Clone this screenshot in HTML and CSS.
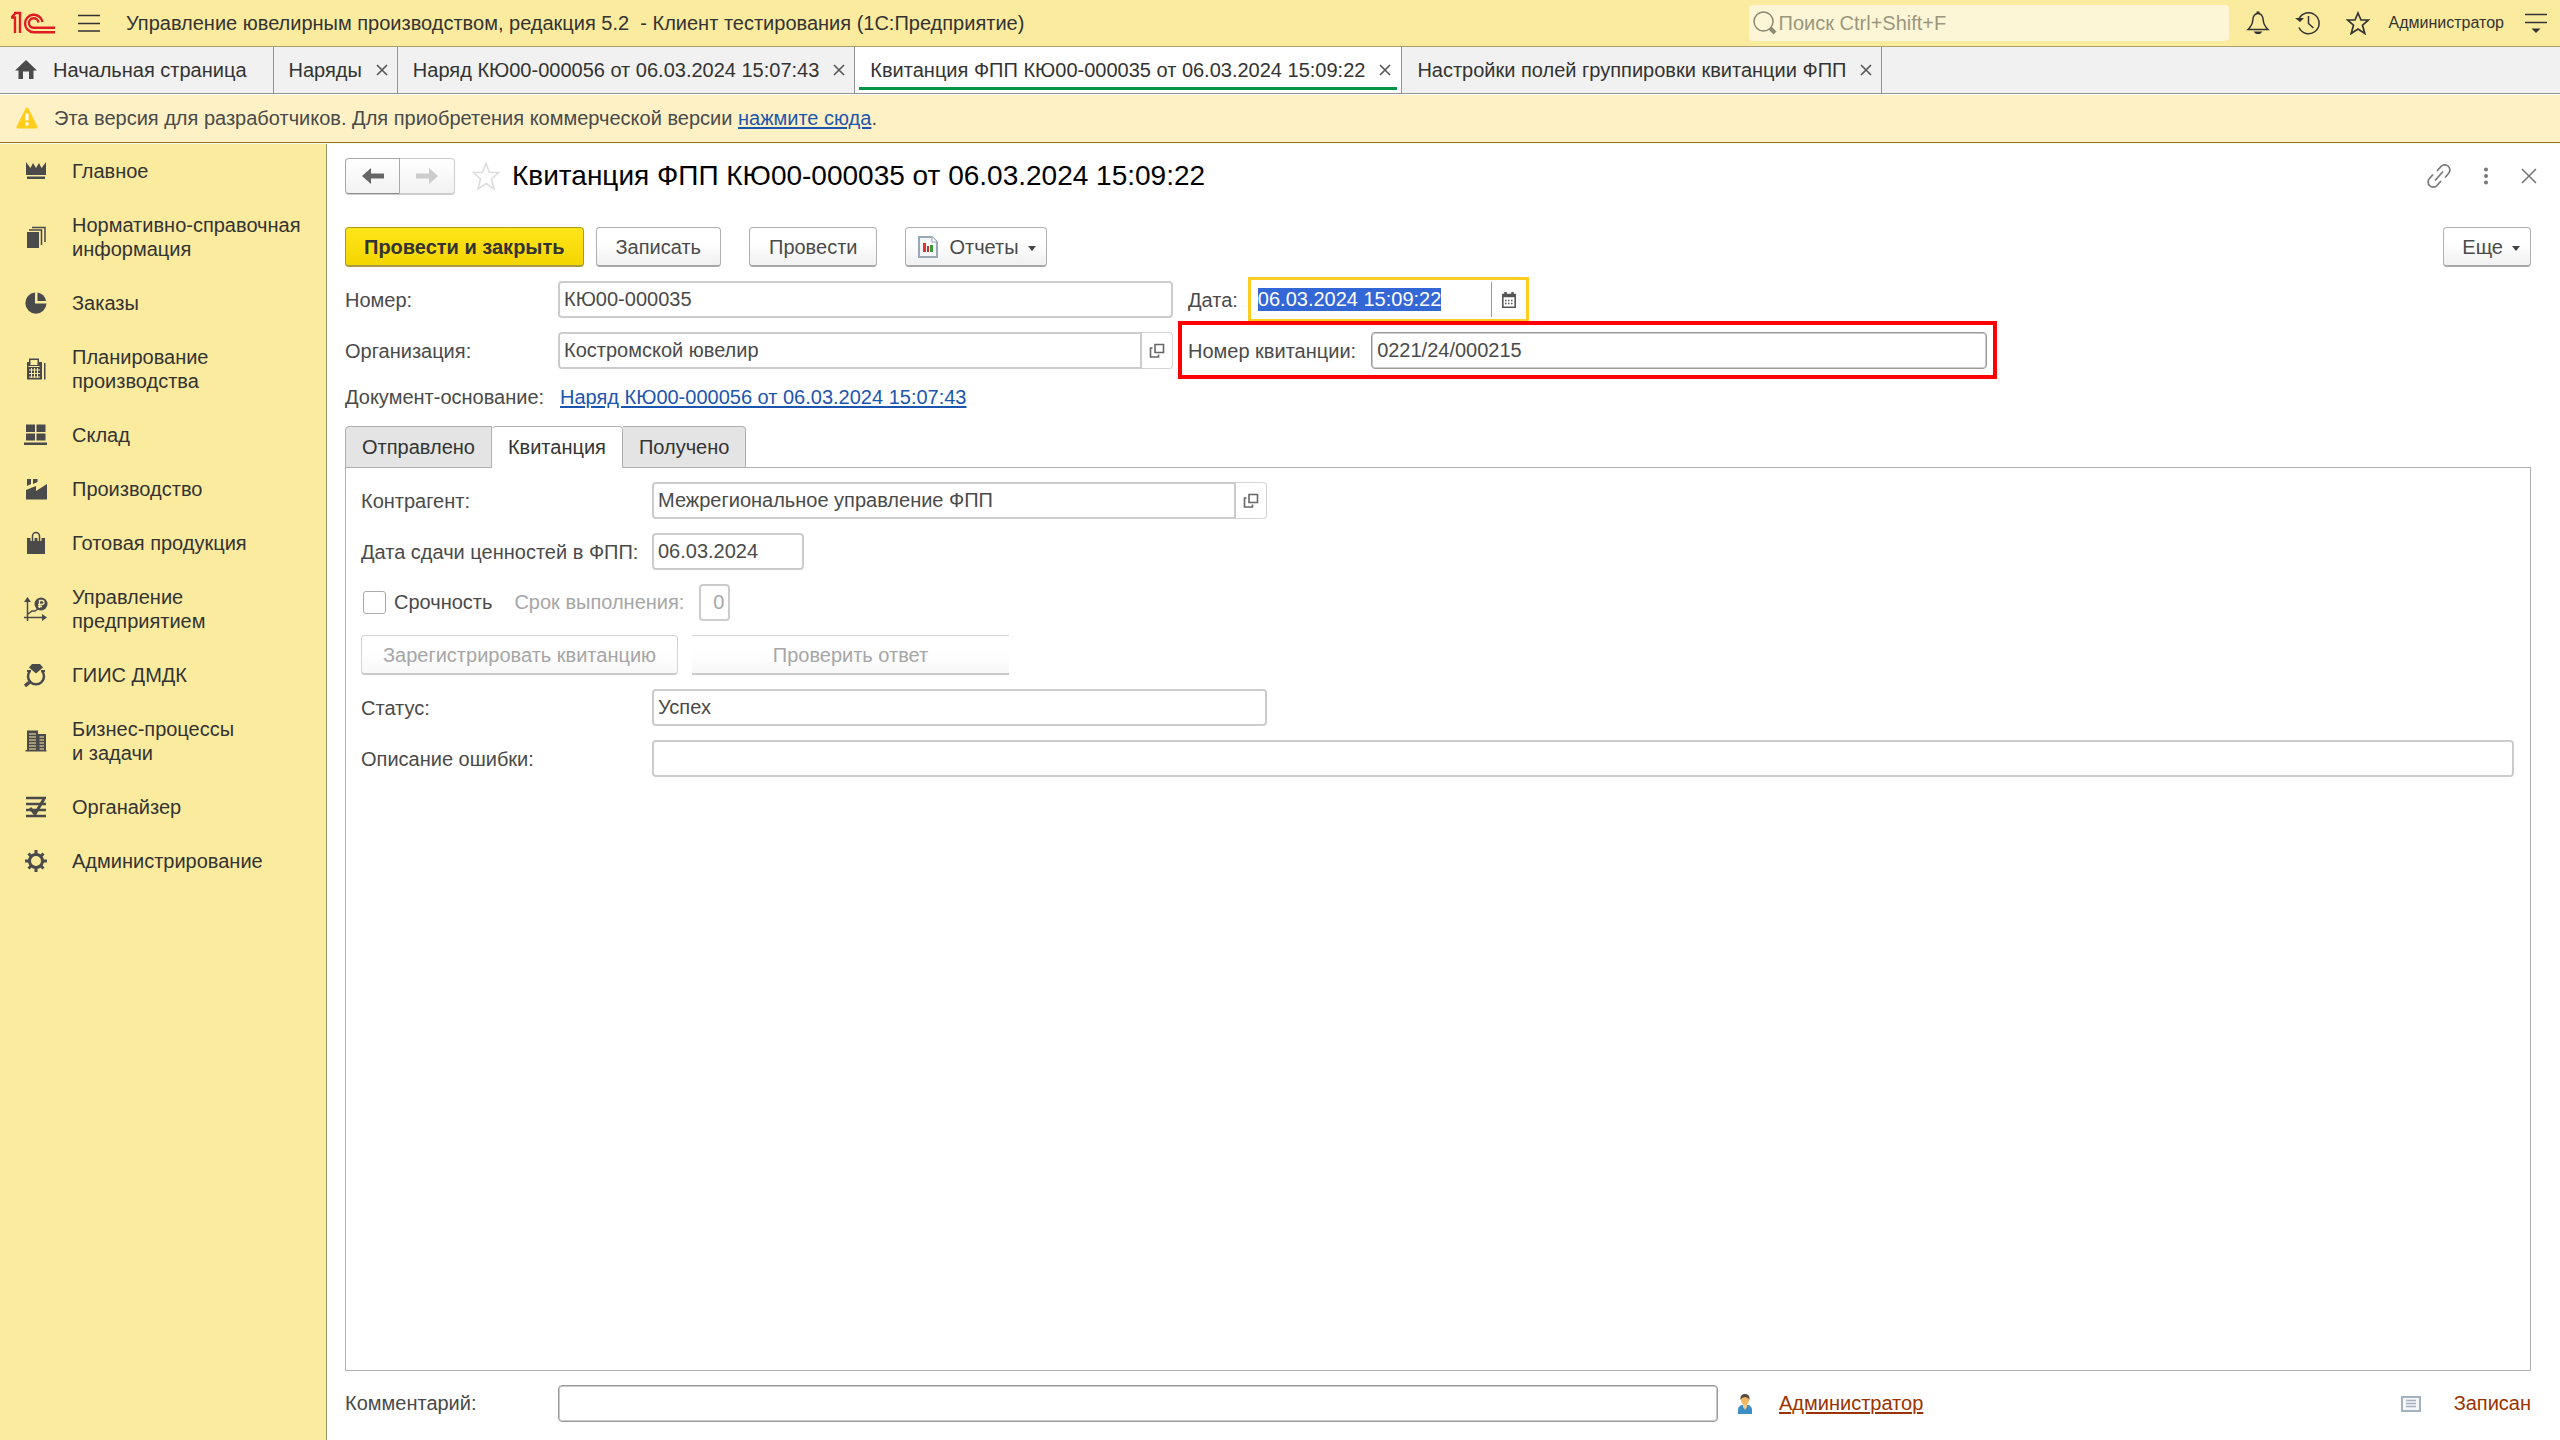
FILE: index.html
```html
<!DOCTYPE html>
<html lang="ru">
<head>
<meta charset="utf-8">
<title>Управление ювелирным производством</title>
<link rel="stylesheet" href="styles.css">
</head>
<body>
<header class="topbar">
  <svg class="logo" width="44" height="24" viewBox="0 0 44 24" fill="none" stroke="#e01b22" stroke-width="2.400"><path d="M0 6.500h4v15.500M3 2h6v20M1 6L4.500 2M31.500 11a8.800 8.800 0 1 0-9 10.300h21.500M27.500 11.500a4.800 4.800 0 1 0-5 5.300h21.500"/></svg>
  <button class="icon-btn menu-btn" aria-label="Меню"><svg width="22" height="18" viewBox="0 0 22 18" fill="none" stroke="#333" stroke-width="1.500"><path d="M0 1.500h22M0 9.500h22M0 17h22"/></svg></button>
  <div class="app-title">Управление ювелирным производством, редакция 5.2&nbsp; - Клиент тестирования (1С:Предприятие)</div>
  <label class="search">
    <svg width="24" height="24" viewBox="0 0 24 24" fill="none" stroke="#8c8873" stroke-width="1.500"><circle cx="10.500" cy="10.500" r="9.500"/><path d="M17 17l5 5" stroke-width="4"/></svg>
    <input type="text" placeholder="Поиск Ctrl+Shift+F" aria-label="Поиск">
  </label>
  <div class="top-tools">
    <button class="icon-btn" aria-label="Уведомления"><svg width="24" height="24" viewBox="0 0 24 24" fill="none" stroke="#333" stroke-width="1.500"><path d="M12 2.500c-4 0-5 3-5.300 7C6.500 13 5 15.500 2 18.500h20c-3-3-4.500-5.500-4.700-9-.3-4-1.300-7-5.300-7z"/><path d="M10.500 1.500h3" stroke-width="2"/><path d="M7.500 20.500h9l-2.500 2.500h-4z" fill="#333" stroke="none"/></svg></button>
    <button class="icon-btn" aria-label="История"><svg width="26" height="24" viewBox="0 0 26 24" fill="none" stroke="#333" stroke-width="1.500"><path d="M4 8a10.500 10.500 0 1 1 0 8.500M13.500 5v7.500l5 4.500"/><path d="M0 7l9 0-4 4z" fill="#333" stroke="none"/></svg></button>
    <button class="icon-btn" aria-label="Избранное"><svg width="24" height="24" viewBox="0 0 24 24" fill="none" stroke="#333" stroke-width="1.700"><path d="M12 2l3 7h7.500l-6 5.200 2.300 8.300L12 18l-6.800 4.500 2.300-8.300-6-5.200H9z"/></svg></button>
    <a class="user" href="#">Администратор</a>
    <button class="icon-btn" aria-label="Настройки"><svg width="22" height="20" viewBox="0 0 22 20" fill="none" stroke="#333" stroke-width="1.500"><path d="M0 1.500h22M0 9.500h22"/><path d="M6.500 15.500h9L11 20z" fill="#333" stroke="none"/></svg></button>
  </div>
</header>

<nav class="tabs">
  <a class="tab tab-home" href="#"><svg width="22" height="20" viewBox="0 0 22 20" fill="#4a4a4a"><path d="M11 0L0 10.500h3.500V19H8v-7.500h6V19h4.500v-8.500H22z"/></svg>Начальная страница</a>
  <div class="tab"><a href="#">Наряды</a><button class="close" aria-label="Закрыть"><svg width="12" height="12" viewBox="0 0 12 12"><path d="M1 1l10 10M11 1L1 11"/></svg></button></div>
  <div class="tab"><a href="#">Наряд КЮ00-000056 от 06.03.2024 15:07:43</a><button class="close" aria-label="Закрыть"><svg width="12" height="12" viewBox="0 0 12 12"><path d="M1 1l10 10M11 1L1 11"/></svg></button></div>
  <div class="tab tab-active"><a href="#">Квитанция ФПП КЮ00-000035 от 06.03.2024 15:09:22</a><button class="close" aria-label="Закрыть"><svg width="12" height="12" viewBox="0 0 12 12"><path d="M1 1l10 10M11 1L1 11"/></svg></button></div>
  <div class="tab"><a href="#">Настройки полей группировки квитанции ФПП</a><button class="close" aria-label="Закрыть"><svg width="12" height="12" viewBox="0 0 12 12"><path d="M1 1l10 10M11 1L1 11"/></svg></button></div>
</nav>

<div class="banner">
  <svg width="22" height="22" viewBox="0 0 22 22"><path d="M11 2L2 20h18z" fill="#ffcd1c" stroke="#ffcd1c" stroke-width="3" stroke-linejoin="round"/><path d="M11 6.500v7M11 15.500v3" stroke="#fff" stroke-width="3"/></svg>
  <span>Эта версия для разработчиков. Для приобретения коммерческой версии <a class="link" href="#">нажмите сюда</a>.</span>
</div>

<div class="workspace">
  <nav class="sidebar">
    <a href="#"><svg viewBox="0 0 24 24"><path d="M2 3l4.500 6L9 4l3 5 3-5 2.500 5L22 3v13H2zM3 17.500h18V20H3z"/></svg><span>Главное</span></a>
    <a href="#"><svg viewBox="0 0 24 24"><path d="M3 7h12v16H3z"/><path d="M5 5h12.500v15M8 2.500h13V17" fill="none" stroke="#4a4a4a" stroke-width="1.500"/></svg><span>Нормативно-справочная информация</span></a>
    <a href="#"><svg viewBox="0 0 24 24"><path d="M11 1.500v11h11.500A10.600 10.600 0 1 1 11 1.500z"/><path d="M13.500 1.500v8.500H22a10 10 0 0 0-8.500-8.500z"/></svg><span>Заказы</span></a>
    <a href="#"><svg viewBox="0 0 24 24"><path d="M3 5h2V1.500h10V5h3v17.500H3zM6.500 3v5h7V3z" fill-rule="evenodd"/><path d="M4.500 9.500h11M5 13h11M5 16.500h11M5 20h11M7.500 11v10M10.500 11v10M13.500 11v10" stroke="#fbeb9e" stroke-width="1"/><path d="M20 6h1.500v16.500H20z"/></svg><span>Планирование производства</span></a>
    <a href="#"><svg viewBox="0 0 24 24"><path d="M2 1.500h9v7.500H2zM12.500 1.500h9v7.500h-9zM2 10.500h9v7H2zM12.500 10.500h9v7h-9zM0 19.500h23V22H0z"/></svg><span>Склад</span></a>
    <a href="#"><svg viewBox="0 0 24 24"><path d="M2 13l10-4v5l11-7v15.500H2zM3 2h4v5L3 9zM9 2h4.500v3L9 7z"/></svg><span>Производство</span></a>
    <a href="#"><svg viewBox="0 0 24 24"><path d="M3 7h18v16H3z"/><path d="M8.500 10V5a3.500 3.500 0 0 1 7 0v5" fill="none" stroke="#fbeb9e" stroke-width="4"/><path d="M8.500 10V5a3.500 3.500 0 0 1 7 0v5" fill="none" stroke="#4a4a4a" stroke-width="1.500"/></svg><span>Готовая продукция</span></a>
    <a href="#"><svg viewBox="0 0 24 24"><path d="M3.500 24V4M0 20.500h20M4 17l4-3h3l4-3" fill="none" stroke="#4a4a4a" stroke-width="1.500"/><path d="M0 5l3.500-5L7 5zM18 17l5 3.500-5 3.500z"/><circle cx="17" cy="7" r="6.500"/><path d="M15.500 11V3.500h2.500a2 2 0 0 1 0 4h-4M14 9.500h4" fill="none" stroke="#fbeb9e" stroke-width="1.300"/></svg><span>Управление предприятием</span></a>
    <a href="#"><svg viewBox="0 0 24 24"><path d="M8 1h8l3 3.500-7 6-7-6z"/><path d="M6 8a8 8 0 1 0 12 0" fill="none" stroke="#4a4a4a" stroke-width="2.500"/><path d="M3 8h4M17 8h4" stroke="#4a4a4a" stroke-width="2"/><path d="M7 18l-6 5" stroke="#4a4a4a" stroke-width="3.500"/></svg><span>ГИИС ДМДК</span></a>
    <a href="#"><svg viewBox="0 0 24 24"><path d="M3 1.500h11V22H3zM14 5h8v17h-8zM1.500 21h21v1.500h-21z"/><path d="M5 5h7M5 8h7M5 11h7M5 14h7M5 17h7M5 20h7M15.500 8h4.500M15.500 11h4.500M15.500 14h4.500M15.500 17h4.500M15.500 20h4.500" stroke="#fbeb9e" stroke-width="1.200"/></svg><span>Бизнес-процессы и&nbsp;задачи</span></a>
    <a href="#"><svg viewBox="0 0 24 24"><path d="M2 3h20M2 9h20M2 15h20M2 21h20" stroke="#4a4a4a" stroke-width="2.400"/><path d="M6 13l5 6L20 4" fill="none" stroke="#4a4a4a" stroke-width="3"/></svg><span>Органайзер</span></a>
    <a href="#"><svg viewBox="0 0 24 24"><circle cx="12" cy="12" r="6.500" fill="none" stroke="#4a4a4a" stroke-width="3"/><path d="M12 1v4M12 19v4M1 12h4M19 12h4M4.500 4.500l3 3M16.500 16.500l3 3M19.500 4.500l-3 3M7.500 16.500l-3 3" stroke="#4a4a4a" stroke-width="3"/></svg><span>Администрирование</span></a>
  </nav>

  <main class="form">
    <div class="title-row">
      <div class="history">
        <button aria-label="Назад"><svg width="22" height="16" viewBox="0 0 22 16" fill="#666"><path d="M0 8l9-8v5.500h13v5H9V16z"/></svg></button>
        <button aria-label="Вперед" disabled><svg width="22" height="16" viewBox="0 0 22 16" fill="#ccc"><path d="M22 8l-9-8v5.500H0v5h13V16z"/></svg></button>
      </div>
      <button class="icon-btn" aria-label="В избранное"><svg width="30" height="30" viewBox="0 0 30 30" fill="none" stroke="#ddd" stroke-width="1.600"><path d="M15 2.500l3.500 9h9l-7 6.500 2.500 10-8-5.500-8 5.500 2.500-10-7-6.500h9z"/></svg></button>
      <h1>Квитанция ФПП КЮ00-000035 от 06.03.2024 15:09:22</h1>
      <div class="title-tools">
        <button class="icon-btn" aria-label="Ссылка"><svg width="24" height="24" viewBox="0 0 24 24" fill="none" stroke="#777" stroke-width="1.700"><path d="M10 7l4-4.500a5 5 0 0 1 7.500 7L18 13.500M14 17l-4 4.500a5 5 0 0 1-7.500-7L6 10.500M8 16.500l8-9"/></svg></button>
        <button class="icon-btn" aria-label="Еще действия"><svg width="6" height="18" viewBox="0 0 6 18" fill="#777"><circle cx="3" cy="2.500" r="2"/><circle cx="3" cy="9" r="2"/><circle cx="3" cy="15.500" r="2"/></svg></button>
        <button class="icon-btn" aria-label="Закрыть"><svg width="16" height="16" viewBox="0 0 16 16" stroke="#777" stroke-width="1.600"><path d="M1 1l14 14M15 1L1 15"/></svg></button>
      </div>
    </div>

    <div class="commands">
      <button class="btn btn-primary">Провести и закрыть</button>
      <button class="btn">Записать</button>
      <button class="btn btn-group">Провести</button>
      <button class="btn btn-group btn-report"><svg width="20" height="22" viewBox="0 0 20 22"><path d="M1 1h13l5 5v15H1z" fill="#f4f6f8" stroke="#9aa7b4" stroke-width="2"/><path d="M14 1v5h5" fill="#fff" stroke="#9aa7b4"/><path d="M5 7h3v9H5z" fill="#e8302a"/><path d="M9 10h2v6H9z" fill="#b33"/><path d="M12 9h3v7h-3z" fill="#3a9a3a"/></svg>Отчеты<i class="caret"></i></button>
      <button class="btn btn-more">Еще<i class="caret"></i></button>
    </div>

    <div class="fields">
      <label for="number">Номер:</label>
      <input class="field" id="number" type="text" value="КЮ00-000035" readonly>
      <div class="pair">
        <label for="date">Дата:</label>
        <div class="date-box">
          <input id="date" type="text" value="06.03.2024 15:09:22">
          <button class="icon-btn" aria-label="Календарь"><svg width="14" height="16" viewBox="0 0 14 16" fill="none" stroke="#555"><path d="M.8 2.500h12.400v12.700H.8z" stroke-width="1.600"/><path d="M1 4h12M3.500 0v3M10.500 0v3" stroke-width="2.500"/><path d="M3 8.500h8M3 11.500h8" stroke-width="1.500" stroke-dasharray="1.500 1.500"/></svg></button>
        </div>
      </div>

      <label for="org">Организация:</label>
      <div class="lookup">
        <input class="field" id="org" type="text" value="Костромской ювелир" readonly>
        <button aria-label="Открыть"><svg width="16" height="16" viewBox="0 0 16 16" fill="none" stroke="#666" stroke-width="1.600"><path d="M6 1.500h8.500v8H6zM3.500 5H1.500v9h8v-2.500"/></svg></button>
      </div>
      <div class="pair receipt">
        <label for="receipt">Номер квитанции:</label>
        <input class="field field-edit" id="receipt" type="text" value="0221/24/000215">
      </div>

      <span class="basis">Документ-основание:</span>
      <a class="link basis basis-link" href="#">Наряд КЮ00-000056 от 06.03.2024 15:07:43</a>
    </div>

    <div class="pages" role="tablist">
      <button role="tab">Отправлено</button>
      <button role="tab" aria-selected="true" class="current">Квитанция</button>
      <button role="tab">Получено</button>
    </div>
    <section class="panel">
      <div class="row">
        <label for="agent">Контрагент:</label>
        <div class="lookup">
          <input class="field" id="agent" type="text" value="Межрегиональное управление ФПП" readonly>
          <button aria-label="Открыть"><svg width="16" height="16" viewBox="0 0 16 16" fill="none" stroke="#666" stroke-width="1.600"><path d="M6 1.500h8.500v8H6zM3.500 5H1.500v9h8v-2.500"/></svg></button>
        </div>
      </div>
      <div class="row">
        <label for="handover">Дата сдачи ценностей в ФПП:</label>
        <input class="field field-date" id="handover" type="text" value="06.03.2024" readonly>
      </div>
      <div class="urgency">
        <input type="checkbox" id="urgent">
        <label for="urgent">Срочность</label>
        <label class="muted" for="term">Срок выполнения:</label>
        <input class="field field-term" id="term" type="text" value="0" disabled>
      </div>
      <div class="actions">
        <button class="btn" disabled>Зарегистрировать квитанцию</button>
        <button class="btn btn-open" disabled>Проверить ответ</button>
      </div>
      <div class="row">
        <label for="status">Статус:</label>
        <input class="field field-status" id="status" type="text" value="Успех" readonly>
      </div>
      <div class="row">
        <label for="error">Описание ошибки:</label>
        <input class="field field-wide" id="error" type="text" readonly>
      </div>
    </section>

    <footer class="footer">
      <label for="comment">Комментарий:</label>
      <input class="field field-edit" id="comment" type="text">
      <svg width="16" height="20" viewBox="0 0 16 20"><path d="M1 20v-4c0-3 2-5 5-5h4c3 0 5 2 5 5v4z" fill="#3b8fc6"/><path d="M6 9h4v4l-2 3-2-3z" fill="#f3c98b"/><ellipse cx="8" cy="6" rx="4" ry="5" fill="#f0b765"/><path d="M3.500 6C3 2 5 0 8 0s5 2 4.500 6L11 4 8 3 5 4z" fill="#554a40"/></svg>
      <a class="author" href="#">Администратор</a>
      <svg class="state-icon" width="20" height="16" viewBox="0 0 20 16" fill="none" stroke="#a5b1bf"><path d="M1 1h18v14H1z" fill="#f4f6f8" stroke-width="2"/><path d="M5 4.500h10M5 7.500h10M5 10.500h10" stroke-width="1.500"/></svg>
      <span class="state">Записан</span>
    </footer>
  </main>
</div>
<script src="app.js"></script>
</body>
</html>
```
FILE: styles.css
```css
* { box-sizing: border-box; }

body {
  margin: 0;
  min-height: 100vh;
  display: flex;
  flex-direction: column;
  font: 20px/24px "Liberation Sans", Arial, sans-serif;
  color: #4a4a4a;
  background: #fff;
}

button, input { font: inherit; color: inherit; }
button { cursor: pointer; }
a { color: inherit; text-decoration: none; }
svg { display: block; flex: none; }

.link { color: #1c55ae; text-decoration: underline; text-decoration-thickness: 2px; text-underline-offset: 2px; }
.icon-btn { display: flex; padding: 0; border: 0; background: none; }

/* Top bar */
.topbar {
  display: flex;
  align-items: center;
  height: 47px;
  padding: 0 13px 0 11px;
  border-bottom: 1px solid #a9a06b;
  background: #fbeb9e;
  color: #333;
}
.menu-btn { margin: 0 26px 0 23px; }
.app-title { flex: 1; white-space: nowrap; }
.search {
  display: flex;
  align-items: center;
  width: 480px;
  height: 36px;
  padding-left: 4px;
  border-radius: 4px;
  background: #fdf6d6;
}
.search input { flex: 1; padding: 0 0 0 2px; border: 0; outline: 0; background: none; }
.search input::placeholder { color: #9a967f; opacity: 1; }
.top-tools { display: flex; align-items: center; gap: 25px; margin-left: 17px; }
.user { margin: 0 -4px 0 -6px; font-size: 16px; }

/* Window tabs */
.tabs { display: flex; height: 47px; border-bottom: 1px solid #949494; margin-bottom: 1px; background: #f1f1f1; color: #333; }
.tab {
  display: flex;
  align-items: center;
  gap: 14px;
  padding: 0 9px 0 15px;
  border-right: 1px solid #949494;
  white-space: nowrap;
}
.tab-home { gap: 16px; padding-right: 26px; }
.tab-active {
  padding: 0 6px 0 11px;
  border-left: 4px solid #fff;
  box-shadow: inset -4px 0 #fff;
  background: linear-gradient(#009646, #009646) 0 40px / 100% 3px no-repeat #fff;
}
.close { padding: 0; border: 0; background: none; }
.tab-active .close { margin-right: 4px; }
.close path { stroke: #555; stroke-width: 1.6; }

.banner {
  display: flex;
  align-items: center;
  gap: 16px;
  height: 48px;
  margin-bottom: 1px;
  padding: 0 16px 1px;
  border-bottom: 1px solid #94780f;
  background: #fef1c5;
}

.workspace { flex: 1; display: flex; }

/* Sections */
.sidebar {
  flex: none;
  display: flex;
  flex-direction: column;
  gap: 30px;
  width: 327px;
  padding: 15px 15px 15px 24px;
  border-right: 1px solid #9c9264;
  background: #fbeb9e;
  color: #333;
}
.sidebar a { display: flex; align-items: center; gap: 24px; }
.sidebar span { max-width: 236px; }
.sidebar svg { width: 24px; height: 24px; fill: #4a4a4a; }

/* Document form */
.form { flex: 1; display: flex; flex-direction: column; min-width: 0; padding: 14px 29px 18px 18px; }
.title-row { display: flex; align-items: center; height: 36px; }
.title-row h1 { flex: 1; margin: 0 0 0 11px; font-size: 28px; line-height: 36px; font-weight: 400; color: #000; }
.history { display: flex; margin-right: 16px; }
.history button {
  display: flex;
  align-items: center;
  justify-content: center;
  width: 55px;
  height: 36px;
  padding: 0;
  border: 1px solid #aaa;
  border-bottom-color: #8f8f8f;
  border-radius: 4px 0 0 4px;
  background: linear-gradient(#fff, #f2f2f2);
  box-shadow: 0 1px #ccc;
}
.history button + button { border-left: 0; border-color: #ccc; border-radius: 0 4px 4px 0; }
.title-tools { display: flex; align-items: center; gap: 32px; margin-right: -6px; }

.commands { display: flex; gap: 12px; margin: 33px 0 14px; }
.btn {
  display: flex;
  align-items: center;
  justify-content: center;
  height: 40px;
  padding: 0 19px;
  border: 1px solid #b0b0b0;
  border-bottom: 2px solid #a6a6a6;
  border-radius: 4px;
  background: linear-gradient(#fff 40%, #f0f0f0);
  white-space: nowrap;
}
.btn:disabled { border-color: #d4d4d4; border-bottom-color: #c8c8c8; color: #a6a6a6; background: linear-gradient(#fff 40%, #f8f8f8); }
.btn-primary { padding: 0 18px; border-color: #ab9a14; border-bottom-color: #a89a40; background: linear-gradient(#ffe51a, #f3d500); color: #333; font-weight: 700; }
.btn-group { margin-left: 16px; }
.btn-report { padding: 0 10px 0 12px; }
.btn-report svg { margin-right: 11px; }
.btn-more { margin-left: auto; padding: 0 10px 0 18px; }
.caret { margin: 4px 0 0 9px; border: 4px solid transparent; border-top: 5px solid #444; border-bottom: 0; }

.fields {
  display: grid;
  grid-template-columns: 213px 615px minmax(0, 1fr);
  gap: 14px 0;
  align-items: center;
}
.field {
  width: 100%;
  min-width: 0;
  height: 37px;
  padding: 0 4px;
  border: 2px solid #ccc;
  border-radius: 4px;
  outline: 0;
  background: #fff;
}
.field-edit { border: 1px solid #999; box-shadow: inset 0 0 0 1px #ccc; padding: 0 5px; }
.basis { line-height: 28px; }
.basis-link { padding-left: 2px; }
.lookup { display: flex; width: 615px; }
.lookup .field { flex: 1; border-radius: 4px 0 0 4px; }
.lookup button {
  display: flex;
  align-items: center;
  justify-content: center;
  width: 31px;
  height: 37px;
  padding: 0;
  border: 1px solid #d4d4d4;
  border-left: 0;
  border-radius: 0 4px 4px 0;
  background: #fff;
}
.pair { display: flex; align-items: center; gap: 10px; margin-left: 15px; white-space: nowrap; }
.date-box {
  display: flex;
  align-items: center;
  width: 281px;
  height: 45px;
  margin: -4px 0;
  border: 3px solid #fc2;
}
.date-box input { flex: 1; min-width: 0; height: 35px; padding: 0 7px; border: 0; border-right: 1px solid #999; outline: 0; }
.date-box button { width: 34px; justify-content: center; }
.date-box input::selection { background: rgba(51, 102, 214, .996); color: #fff; }

.receipt { position: relative; gap: 15px; width: 799px; }
.receipt::after { content: ""; position: absolute; inset: -11px -10px -10px; border: 4px solid #f00; pointer-events: none; }

/* Form pages */
.pages { display: flex; margin: 15px 0 -1px; }
.pages button {
  position: relative;
  height: 42px;
  padding: 0 16px;
  border: 1px solid #b0b0b0;
  border-left: 0;
  border-radius: 0 4px 0 0;
  background: #e4e4e4;
  color: #333;
}
.pages button:first-child { border-left: 1px solid #b0b0b0; border-radius: 4px 0 0; }
.pages .current { border-radius: 4px 4px 0 0; border-bottom-color: #fff; background: #fff; }
.panel { flex: 1; display: flex; flex-direction: column; gap: 14px; padding: 14px 16px 14px 15px; border: 1px solid #b0b0b0; }
.row { display: grid; grid-template-columns: 291px minmax(0, 1fr); align-items: center; }
.field-date { width: 152px; }
.field-status { width: 615px; }
.urgency { display: flex; align-items: center; }
.urgency label { margin-left: 8px; padding-bottom: 2px; }
.urgency .muted { margin: 0 15px 0 22px; color: #a6a6a6; }
.urgency input[type="checkbox"] { appearance: none; width: 23px; height: 23px; margin: 0 0 0 2px; border: 1px solid #aaa; border-radius: 3px; }
.urgency .field-term { width: 31px; color: #a6a6a6; text-align: right; }
.actions { display: flex; gap: 14px; }
.actions .btn { width: 317px; }
.actions .btn-open { border-left: 0; border-right: 0; border-radius: 0; }

.footer { display: flex; align-items: center; margin-top: 14px; }
.footer label, .author, .state { padding-bottom: 2px; }
.footer label { width: 213px; }
.footer .field { width: 1160px; margin-right: 19px; }
.author { margin-left: 26px; color: #930; text-decoration: underline; text-decoration-thickness: 2px; text-underline-offset: 2px; }
.state-icon { margin-left: auto; }
.state { margin-left: 33px; color: #930; }
```
FILE: app.js
```js
// The date field opens with its value selected.
const dateField = document.getElementById("date");
dateField.focus();
dateField.select();
```
